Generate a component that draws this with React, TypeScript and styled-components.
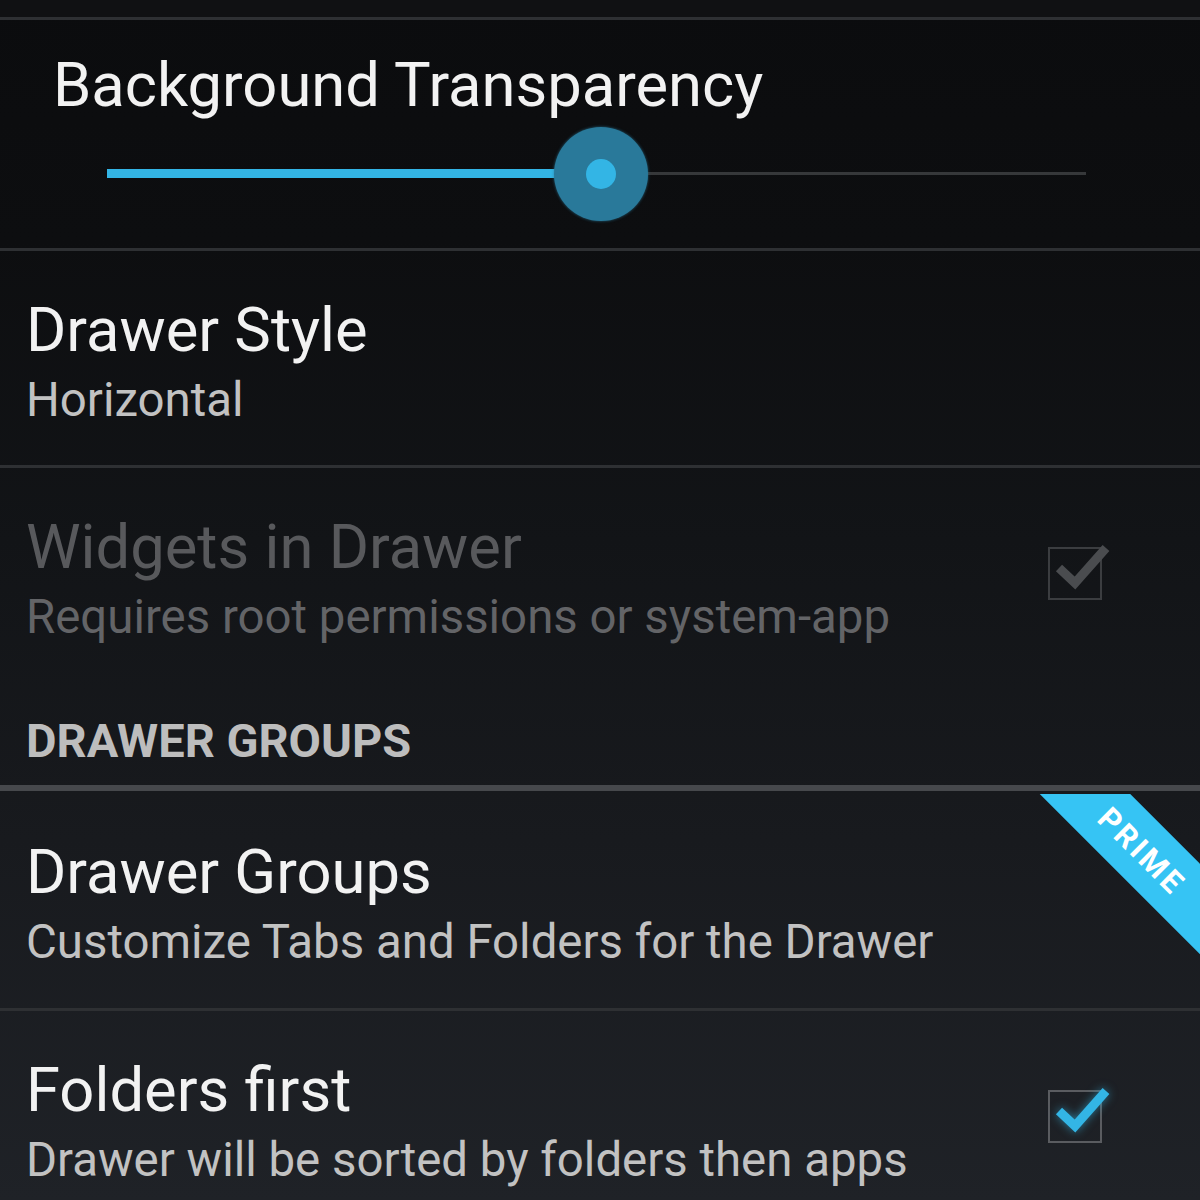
import React from "react";
import styled, { createGlobalStyle } from "styled-components";

const colors = {
  blue: "#33b5e5",
  ribbon: "#36c4f4",
  title: "#f2f2f2",
  summary: "#c2c2c2",
  disabledTitle: "#58595c",
  disabledSummary: "#636467",
  header: "#bdbdbd",
  divider: "#2e3033",
};

const GlobalStyle = createGlobalStyle`
  html, body {
    margin: 0;
    padding: 0;
    background: #0b0c0e;
  }
  body {
    font-family: Roboto, "Noto Sans", sans-serif;
  }
`;

interface IPref {
  title: string;
  summary: string;
  disabled?: boolean;
  checked?: boolean;
  badge?: boolean;
}

const prefs: IPref[] = [
  { title: "Drawer Style", summary: "Horizontal" },
  {
    title: "Widgets in Drawer",
    summary: "Requires root permissions or system-app",
    disabled: true,
    checked: true,
  },
];

const groupPrefs: IPref[] = [
  {
    title: "Drawer Groups",
    summary: "Customize Tabs and Folders for the Drawer",
    badge: true,
  },
  {
    title: "Folders first",
    summary: "Drawer will be sorted by folders then apps",
    checked: true,
  },
];

const CheckBox = ({ disabled }: { disabled?: boolean }) => (
  <Box disabled={disabled}>
    <CheckSvg width="66" height="56" viewBox="0 0 66 56" disabled={disabled}>
      <path
        d="M11 24 L27 39 L58 4"
        fill="none"
        stroke={disabled ? "#4a4c4f" : colors.blue}
        strokeWidth="9"
        strokeLinejoin="miter"
      />
    </CheckSvg>
  </Box>
);

const Pref = ({ pref }: { pref: IPref }) => (
  <Row badge={pref.badge}>
    <TextCol>
      <Title disabled={pref.disabled}>{pref.title}</Title>
      <Summary disabled={pref.disabled}>{pref.summary}</Summary>
    </TextCol>
    {pref.checked && <CheckBox disabled={pref.disabled} />}
    {pref.badge && (
      <Corner>
        <Band>PRIME</Band>
      </Corner>
    )}
  </Row>
);

export default function App() {
  const value = 0.505;

  return (
    <>
      <GlobalStyle />
      <Screen>
        <TopStrip />
        <Divider />
        <SliderPref>
          <SliderTitle>Background Transparency</SliderTitle>
          <Slider>
            <Track />
            <Active style={{ width: `${value * 100}%` }} />
            <Thumb style={{ left: `${value * 100}%` }}>
              <Knob />
            </Thumb>
          </Slider>
        </SliderPref>
        <Divider />
        <Pref pref={prefs[0]} />
        <Divider />
        <Pref pref={prefs[1]} />
        <Header>DRAWER GROUPS</Header>
        <Divider thick />
        <Pref pref={groupPrefs[0]} />
        <Divider />
        <Pref pref={groupPrefs[1]} />
      </Screen>
    </>
  );
}

const Screen = styled.div`
  width: 1200px;
  height: 1200px;
  overflow: hidden;
  display: flex;
  flex-direction: column;
  background: linear-gradient(
    to bottom,
    #0b0c0e 0%,
    #0d0e10 20%,
    #121417 45%,
    #181a1e 70%,
    #1f2227 100%
  );
`;

const TopStrip = styled.div`
  height: 17px;
  flex-shrink: 0;
  background: #101113;
`;

const Divider = styled.div<{ thick?: boolean }>`
  flex-shrink: 0;
  height: ${({ thick }) => (thick ? "6px" : "3px")};
  background: ${({ thick }) => (thick ? "#46484c" : colors.divider)};
`;

const SliderPref = styled.div`
  display: flex;
  flex-direction: column;
  padding: 30px 0 20px 53px;
  flex-shrink: 0;
`;

const SliderTitle = styled.div`
  font-size: 61.5px;
  line-height: 70px;
  color: ${colors.title};
`;

const Slider = styled.div`
  position: relative;
  height: 108px;
  margin-left: 54px;
  width: 979px;
`;

const Track = styled.div`
  position: absolute;
  left: 0;
  right: 0;
  top: 52px;
  height: 3px;
  background: #36383a;
`;

const Active = styled.div`
  position: absolute;
  left: 0;
  top: 49px;
  height: 9px;
  background: ${colors.blue};
`;

const Thumb = styled.div`
  position: absolute;
  top: 7px;
  width: 94px;
  height: 94px;
  margin-left: -47px;
  border-radius: 50%;
  background: #29799a;
  box-shadow: 0 0 3px rgba(41, 121, 154, 0.8);
  display: flex;
  align-items: center;
  justify-content: center;
`;

const Knob = styled.div`
  width: 30px;
  height: 30px;
  border-radius: 50%;
  background: ${colors.blue};
`;

const Row = styled.div<{ badge?: boolean }>`
  position: relative;
  flex-shrink: 0;
  display: flex;
  align-items: center;
  padding: ${({ badge }) => (badge ? "46px 98px 37px 26px" : "44px 98px 36px 26px")};
`;

const TextCol = styled.div`
  flex: 1;
  display: flex;
  flex-direction: column;
  white-space: nowrap;
`;

const Title = styled.div<{ disabled?: boolean }>`
  font-size: 61.5px;
  line-height: 70px;
  color: ${({ disabled }) => (disabled ? colors.disabledTitle : colors.title)};
`;

const Summary = styled.div<{ disabled?: boolean }>`
  margin-top: 6px;
  font-size: 47.4px;
  line-height: 58px;
  color: ${({ disabled }) => (disabled ? colors.disabledSummary : colors.summary)};
`;

const Header = styled.div`
  flex-shrink: 0;
  padding: 32px 0 17px 26px;
  font-size: 47px;
  line-height: 54px;
  font-weight: 700;
  color: ${colors.header};
`;

const Box = styled.div<{ disabled?: boolean }>`
  position: relative;
  width: 50px;
  height: 49px;
  margin-bottom: 12px;
  border: 2px solid ${({ disabled }) => (disabled ? "#3b3d40" : "#5a5c60")};
`;

const CheckSvg = styled.svg<{ disabled?: boolean }>`
  position: absolute;
  left: -2px;
  top: -5px;
  overflow: visible;
  filter: ${({ disabled }) =>
    disabled ? "none" : "drop-shadow(0 0 5px rgba(51, 181, 229, 0.6))"};
`;

const Corner = styled.div`
  position: absolute;
  top: 3px;
  right: 0;
  width: 200px;
  height: 200px;
  overflow: hidden;
`;

const Band = styled.div`
  position: absolute;
  left: 12px;
  top: 25px;
  width: 260px;
  height: 64px;
  transform: rotate(45deg);
  background: ${colors.ribbon};
  color: #ffffff;
  font-size: 31px;
  font-weight: 700;
  letter-spacing: 3px;
  display: flex;
  align-items: center;
  justify-content: center;
`;
